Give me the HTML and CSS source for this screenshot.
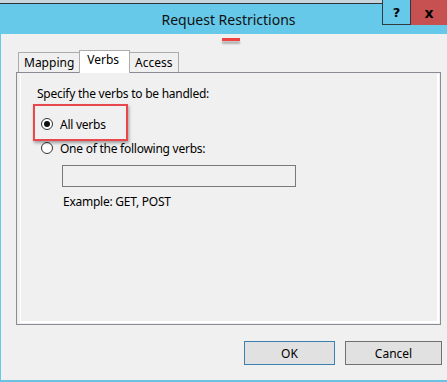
FILE: index.html
```html
<!doctype html>
<html lang="en">
    <head>
        <meta charset="UTF-8" />
        <title>Request Restrictions</title>
        <link rel="stylesheet" href="styles.css">
    </head>
    <body>
        <div class="window">
            <div class="backdrop"></div>
            <header class="titlebar">
                <span class="title">Request Restrictions</span>
                <div class="caption-buttons">
                    <span class="cap-btn help">?</span>
                    <span class="cap-btn close">x</span>
                </div>
            </header>
            <div class="client">
                <span class="marker"></span>
                <div class="tabs">
                    <span class="tab">Mapping</span>
                    <span class="tab active">Verbs</span>
                    <span class="tab">Access</span>
                </div>
                <div class="panel">
                    <div class="page">
                        <p class="lead">Specify the verbs to be handled:</p>
                        <label class="radio-row highlighted">
                            <span class="radio checked"></span>
                            All verbs
                        </label>
                        <label class="radio-row">
                            <span class="radio"></span>
                            One of the following verbs:
                        </label>
                        <div class="verb-input"></div>
                        <p class="hint">Example: GET, POST</p>
                    </div>
                </div>
                <div class="actions">
                    <button class="btn default">OK</button>
                    <button class="btn">Cancel</button>
                </div>
            </div>
        </div>
    </body>
</html>
```

FILE: styles.css
```css
:root {
    --title-blue: #66c9e9;
    --face: #f0f0f0;
    --text: #000000;
    --frame-gray: #898c95;
    --annot-red: #e8474b;
}

* {
    margin: 0;
    padding: 0;
    box-sizing: border-box;
}

body {
    width: 447px;
    height: 382px;
    overflow: hidden;
    font-family: "Noto Sans", "Open Sans", sans-serif;
    font-size: 12px;
    color: var(--text);
    background: var(--face);
}

.window {
    height: 382px;
    display: flex;
    flex-direction: column;
    position: relative;
}

.backdrop {
    height: 4px;
    background: #c9d5dc;
    border-bottom: 1px solid #2e3338;
}

.titlebar {
    height: 30px;
    background: var(--title-blue);
    display: flex;
    justify-content: center;
    align-items: center;
}

.title {
    font-size: 14px;
    color: #111;
    padding-left: 10px;
}

.caption-buttons {
    position: absolute;
    top: 0;
    right: 0;
    display: flex;
}

.cap-btn {
    height: 25px;
    display: flex;
    justify-content: center;
    align-items: center;
    font-weight: bold;
    font-size: 13px;
    font-family: "DejaVu Sans", sans-serif;
}

.help {
    width: 29px;
    background: var(--title-blue);
    border: 1px solid #2f3a40;
    border-top: none;
}

.close {
    width: 36px;
    background: #c75050;
    font-size: 14px;
}

.client {
    flex: 1;
    display: flex;
    flex-direction: column;
    border-left: 1px solid var(--title-blue);
    border-bottom: 2px solid #6cc2e2;
    position: relative;
}

.marker {
    position: absolute;
    left: 221px;
    top: 4px;
    width: 18px;
    height: 3px;
    background: #f04444;
    box-shadow: 0 3px 2px rgba(0, 0, 0, 0.25);
}

.tabs {
    display: flex;
    align-items: flex-end;
    padding: 15px 0 0 16px;
    height: 38px;
}

.tab {
    height: 20px;
    padding: 0 5px 0 5px;
    border: 1px solid #acacac;
    border-bottom: none;
    background: var(--face);
    line-height: 20px;
    margin-right: -1px;
}

.tab:first-child {
    margin-left: 1px;
}

.tab.active {
    height: 23px;
    padding: 0 10px 0 7px;
    line-height: 17px;
    background: #ffffff;
    position: relative;
    z-index: 2;
    margin-bottom: -1px;
}

.panel {
    margin-left: 15px;
    width: 425px;
    height: 253px;
    border: 1px solid var(--frame-gray);
    padding: 1px 1px 1px 3px;
}

.page {
    height: 100%;
    border-right: 2px solid #ffffff;
    border-bottom: 2px solid #ffffff;
    border-left: 1px solid #ffffff;
    padding: 12px 0 0 16px;
    display: flex;
    flex-direction: column;
    align-items: flex-start;
    letter-spacing: -0.25px;
}

.lead {
    line-height: 16px;
}

.radio-row {
    display: flex;
    align-items: center;
    gap: 7px;
    height: 24px;
    padding-left: 4px;
}

.highlighted {
    margin-top: 10px;
    position: relative;
}

.highlighted::before {
    content: "";
    position: absolute;
    left: -4px;
    top: -8px;
    width: 91px;
    height: 33px;
    border: 2px solid var(--annot-red);
    box-shadow: 1px 2px 3px rgba(0, 0, 0, 0.35);
}

.radio {
    width: 12px;
    height: 12px;
    border: 1px solid #333333;
    border-radius: 50%;
    background: #ffffff;
    display: flex;
    justify-content: center;
    align-items: center;
}

.radio.checked::after {
    content: "";
    width: 6px;
    height: 6px;
    border-radius: 50%;
    background: #111111;
}

.verb-input {
    margin: 5px 0 0 25px;
    width: 234px;
    height: 22px;
    border: 1px solid #7a7a7a;
}

.hint {
    margin: 7px 0 0 26px;
    line-height: 16px;
}

.actions {
    display: flex;
    justify-content: flex-end;
    gap: 10px;
    padding: 16px 5px 0 0;
}

.btn {
    font: inherit;
    width: 97px;
    height: 24px;
    background: #e1e1e1;
    border: 1px solid #707070;
}

.btn.default {
    width: 91px;
    border-color: #3c7fb1;
}
```
